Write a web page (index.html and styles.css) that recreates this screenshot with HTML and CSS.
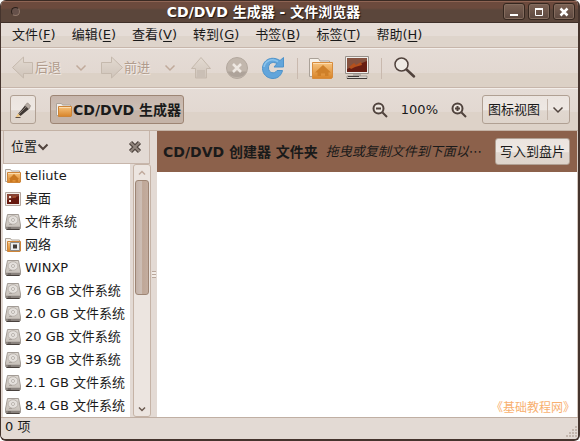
FILE: index.html
```html
<!DOCTYPE html>
<html lang="zh-CN">
<head>
<meta charset="utf-8">
<title>CD/DVD 生成器 - 文件浏览器</title>
<link rel="stylesheet" href="styles.css">
</head>
<body>
<svg class="defs" aria-hidden="true">
  <defs>
    <linearGradient id="gold" x1="0" y1="0" x2="0" y2="1"><stop offset="0" stop-color="#f8c47e"/><stop offset="1" stop-color="#d88428"/></linearGradient>
    <linearGradient id="metal" x1="0" y1="0" x2="0" y2="1"><stop offset="0" stop-color="#ddd8d2"/><stop offset="1" stop-color="#c3bcb5"/></linearGradient>
    <linearGradient id="fade" x1="0" y1="0" x2="0" y2="1"><stop offset="0" stop-color="#e3dad1"/><stop offset="1" stop-color="#cfc4ba"/></linearGradient>
  </defs>
  <symbol id="disk" viewBox="0 0 16 16">
    <path d="M2.500 .5h11l2 10.500v3.500l-1 1h-13l-1-1V11z" fill="url(#metal)" stroke="#a39c96"/>
    <path d="M1 12h14v2.500l-.5.500h-13l-.5-.5z" fill="#8a837e"/>
    <path d="M1 12.500h14" stroke="#b9b2ac"/>
    <path d="M1.500 15.500h13" stroke="#48413d"/>
    <path d="M3 14h3" stroke="#5f5752"/>
    <ellipse cx="8" cy="6" rx="5" ry="4.300" fill="#e4e0dc" stroke="#b8b1ab"/>
    <circle cx="8" cy="6" r="1.500" fill="#f5f2ef" stroke="#aaa39d" stroke-width=".8"/>
    <path d="M4 10.500h3" stroke="#a8a19b"/>
  </symbol>
  <symbol id="folder" viewBox="0 0 16 16">
    <path d="M.5 13.500v-12h5l1 1.500h8v10.500z" fill="#f4efe9" stroke="#aca49b"/>
    <path d="M2.500 4.500h13v9.500l-.5.500h-12.500z" fill="url(#gold)" stroke="#ce8538"/>
    <path d="M3 5.500h12" stroke="#fbdcae"/>
  </symbol>
  <symbol id="home" viewBox="0 0 24 24">
    <path d="M.5 20.500V2.500h9l1.500 2.500h9.500V20z" fill="#f6f1ea" stroke="#aaa198"/>
    <path d="M3.500 6.500h20v15l-1 1h-19z" fill="url(#gold)" stroke="#d78c3d"/>
    <path d="M6 16.500l8-7.500 8 7.500h-2.500V20H16v-2.500h-4V20H8.500v-3.500z" fill="#cf8029"/>
    <path d="M4 7.500h19" stroke="#fddcae"/>
  </symbol>
</svg>
<div class="window">
  <header class="titlebar">
    <button class="window-menu" aria-label="窗口菜单"></button>
    <h1>CD/DVD 生成器 - 文件浏览器</h1>
    <div class="window-buttons">
      <button aria-label="最小化"><svg viewBox="0 0 12 12"><path d="M2 9h8" stroke="#fff" stroke-width="2"/></svg></button>
      <button aria-label="最大化"><svg viewBox="0 0 12 12"><path d="M2.500 2.500h7v7h-7z" fill="none" stroke="#fff"/><path d="M2 3h8" stroke="#fff" stroke-width="2"/></svg></button>
      <button aria-label="关闭"><svg viewBox="0 0 12 12"><path d="M2.500 2.500l7 7m0-7l-7 7" stroke="#fff" stroke-width="2.500"/></svg></button>
    </div>
  </header>
  <nav class="menubar">
    <button>文件(<u>F</u>)</button>
    <button>编辑(<u>E</u>)</button>
    <button>查看(<u>V</u>)</button>
    <button>转到(<u>G</u>)</button>
    <button>书签(<u>B</u>)</button>
    <button>标签(<u>T</u>)</button>
    <button>帮助(<u>H</u>)</button>
  </nav>
  <div class="toolbar">
    <button class="nav" disabled><svg class="i24" viewBox="0 0 24 24"><path d="M1.500 11.500L12.500 1v5.500h9v11h-9V22z" fill="url(#fade)" stroke="#c5b9ad"/></svg>后退</button>
    <button class="drop" disabled aria-label="后退历史"><svg viewBox="0 0 12 8"><path d="M1.500 1.500L6 6l4.500-4.500" fill="none" stroke="#c0aa9b" stroke-width="1.500"/></svg></button>
    <button class="nav" disabled><svg class="i24" viewBox="0 0 24 24"><path d="M22.500 11.500L11.500 1v5.500h-10v11h10V22z" fill="url(#fade)" stroke="#c5b9ad"/></svg>前进</button>
    <button class="drop" disabled aria-label="前进历史"><svg viewBox="0 0 12 8"><path d="M1.500 1.500L6 6l4.500-4.500" fill="none" stroke="#c0aa9b" stroke-width="1.500"/></svg></button>
    <button class="tool" disabled aria-label="向上"><svg class="i24" viewBox="0 0 24 24"><path d="M12 1.500L21.500 12.500H17.500v9.500H6.500v-9.500H2.500z" fill="url(#fade)" stroke="#c5b9ad"/><path d="M8 14h8v7H8z" fill="#cabfb5"/></svg></button>
    <button class="tool" disabled aria-label="停止"><svg class="i24" viewBox="0 0 24 24"><circle cx="12" cy="12" r="10.500" fill="#c2b7ad" stroke="#b3a89e"/><path d="M2.500 15.500a10 8 0 0 0 19 0z" fill="#aea39a"/><path d="M8 8l8 8m0-8l-8 8" stroke="#eee8e2" stroke-width="2.500"/></svg></button>
    <button class="tool" aria-label="刷新"><svg class="i24" viewBox="0 0 24 24"><path d="M22.500 1.500v9.500h-9.500l3-3.500c-5-2.500-8.500 0-8.500 4.500 0 5 6 6.500 8.500 2.500h5.500c-1 4.500-4.500 8-9.500 8C6 22.500 1.500 18 1.500 12.500c0-8 8.500-13.500 17.500-8z" fill="#62a5db" stroke="#4e93ca"/><path d="M3 11C4 4.500 11 2 17 5.500" fill="none" stroke="#8cc4ec" stroke-width="1.500"/></svg></button>
    <span class="sep"></span>
    <button class="tool" aria-label="主文件夹"><svg class="i24" viewBox="0 0 24 24"><use href="#home"/></svg></button>
    <button class="tool" aria-label="计算机"><svg class="i24" viewBox="0 0 24 24"><path d="M.5.500h23v17H.5z" fill="#f1eeeb" stroke="#97908a"/><path d="M2 2h20v14H2z" fill="#681e13"/><path d="M2 2h20v3L2 13z" fill="#86523f"/><path d="M4 11l5-4 2 2 5-3 1 3-7 2-4 2z" fill="#b5501c"/><path d="M8 18h8v2H8z" fill="#b5aea8"/><path d="M2 20h20v2.500H2z" fill="#ddd8d2" stroke="#8c857f" stroke-width=".7"/><path d="M3 20.500h11M2 22.500h20" stroke="#413b38"/></svg></button>
    <span class="sep"></span>
    <button class="tool" aria-label="搜索"><svg class="i24" viewBox="0 0 24 24"><circle cx="8.500" cy="8.500" r="6.500" fill="#efeae4" stroke="#50423c" stroke-width="1.500"/><path d="M13.500 13.500L21 20.500" stroke="#50423c" stroke-width="2.500" stroke-linecap="round"/></svg></button>
  </div>
  <div class="locationbar">
    <button class="raised edit" aria-label="编辑位置"><svg class="i16" viewBox="0 0 16 16"><path d="M3 12l7-8.500 4 3.500-8.500 7z" fill="#3f3834"/><path d="M4 12l7-7" stroke="#887d75"/><path d="M10 3.500L12.500.8l3 3L14 7z" fill="#b6aca4" stroke="#8c827a" stroke-width=".7"/><path d="M3 11.500L.5 15.500l5-1.500z" fill="#edc581"/><path d="M.5 15.500h5" stroke="#5b4c43"/></svg></button>
    <button class="raised path"><svg class="i16" viewBox="0 0 16 16"><use href="#folder"/></svg>CD/DVD 生成器</button>
    <div class="zoom">
      <button aria-label="缩小"><svg class="i16" viewBox="0 0 16 16"><circle cx="6.500" cy="6.500" r="5" fill="#ede6df" stroke="#50433d" stroke-width="2"/><path d="M4 6.500h5M10.500 10.500L15 15" stroke="#50433d" stroke-width="2"/></svg></button>
      <span>100%</span>
      <button aria-label="放大"><svg class="i16" viewBox="0 0 16 16"><circle cx="6.500" cy="6.500" r="5" fill="#ede6df" stroke="#50433d" stroke-width="2"/><path d="M4 6.500h5M6.500 4v5M10.500 10.500L15 15" stroke="#50433d" stroke-width="2"/></svg></button>
    </div>
    <div class="combo">
      <select class="raised" aria-label="视图"><option>图标视图</option></select>
      <svg viewBox="0 0 12 8"><path d="M1.500 1.500L6 6l4.500-4.500" fill="none" stroke="#51443e" stroke-width="1.500"/></svg>
    </div>
  </div>
  <main class="panes">
    <aside class="sidebar">
      <div class="side-head">
        <button class="side-title">位置<svg viewBox="0 0 12 8"><path d="M1.500 1.500L6 6l4.500-4.500" fill="none" stroke="#51443e" stroke-width="2"/></svg></button>
        <button class="side-close" aria-label="关闭侧边栏"><svg viewBox="0 0 14 14"><path d="M2.500 2.500l9 9m0-9l-9 9" stroke="#4e443e" stroke-width="4.500"/><path d="M2.500 2.500l9 9m0-9l-9 9" stroke="#92867e" stroke-width="2"/></svg></button>
      </div>
      <div class="side-body">
        <ul class="places">
          <li><svg class="i16" viewBox="0 0 16 16"><use href="#folder"/><path d="M4 11l5-5 5 5h-1v3h-2.500v-2h-3v2H5v-3z" fill="#c97720"/></svg>teliute</li>
          <li><svg class="i16" viewBox="0 0 16 16"><path d="M.5 1.500h15v13H.5z" fill="#f2eeea" stroke="#b4a69e"/><path d="M2 3h12v10H2z" fill="#67190f"/><path d="M2 3h12v2L2 9z" fill="#884333"/><path d="M4 5h2v2H4zm0 4h2v2H4z" fill="#f5e5dc"/><path d="M8 6h3" stroke="#c25d2c"/></svg>桌面</li>
          <li><svg class="i16" viewBox="0 0 16 16"><use href="#disk"/></svg>文件系统</li>
          <li><svg class="i16" viewBox="0 0 16 16"><use href="#folder"/><path d="M5.500 5.500h9v8h-9z" fill="#e8ecee" stroke="#8d8883"/><path d="M8 7.500h4v4H8z" fill="#403a37"/></svg>网络</li>
          <li><svg class="i16" viewBox="0 0 16 16"><use href="#disk"/></svg>WINXP</li>
          <li><svg class="i16" viewBox="0 0 16 16"><use href="#disk"/></svg>76 GB 文件系统</li>
          <li><svg class="i16" viewBox="0 0 16 16"><use href="#disk"/></svg>2.0 GB 文件系统</li>
          <li><svg class="i16" viewBox="0 0 16 16"><use href="#disk"/></svg>20 GB 文件系统</li>
          <li><svg class="i16" viewBox="0 0 16 16"><use href="#disk"/></svg>39 GB 文件系统</li>
          <li><svg class="i16" viewBox="0 0 16 16"><use href="#disk"/></svg>2.1 GB 文件系统</li>
          <li><svg class="i16" viewBox="0 0 16 16"><use href="#disk"/></svg>8.4 GB 文件系统</li>
        </ul>
        <div class="scrollbar">
          <button aria-label="向上滚动"><svg viewBox="0 0 8 6"><path d="M1 4.500l3-3 3 3" fill="none" stroke="#c0aa9d" stroke-width="1.500"/></svg></button>
          <div class="track"><div class="thumb"></div></div>
          <button aria-label="向下滚动"><svg viewBox="0 0 8 6"><path d="M1 1.500l3 3 3-3" fill="none" stroke="#6b5a50" stroke-width="1.500"/></svg></button>
        </div>
      </div>
    </aside>
    <div class="divider"><i></i></div>
    <section class="content">
      <div class="banner">
        <strong>CD/DVD 创建器 文件夹</strong>
        <em>拖曳或复制文件到下面以⋯</em>
        <button class="raised">写入到盘片</button>
      </div>
      <div class="canvas"><span>《基础教程网》</span></div>
    </section>
  </main>
  <footer class="statusbar">
    <span>0 项</span>
    <svg viewBox="0 0 12 12"><path d="M9 1h2M9 4h2M6 4h2M9 7h2M6 7h2M3 7h2M9 10h2M6 10h2M3 10h2M0 10h2" stroke="#b9aaa0" stroke-width="1.500"/></svg>
  </footer>
</div>
</body>
</html>
```
FILE: styles.css
```css
* { box-sizing: border-box; }
body {
  margin: 0;
  background: #fff;
  color: #1a1a1a;
  font: 13px/18px "DejaVu Sans", "Noto Sans CJK SC", sans-serif;
}
button, select { margin: 0; padding: 0; border: 0; background: none; color: inherit; font: inherit; }
svg { display: block; flex: none; }
.defs { position: absolute; width: 0; height: 0; }
.i24 { width: 24px; height: 24px; }
.i16 { width: 16px; height: 16px; }
.window {
  display: flex;
  flex-direction: column;
  height: 100vh;
  overflow: hidden;
  border: 1px solid #45342d;
  border-width: 0 2px 2px 1px;
  border-radius: 6px;
  background: #e3dad4;
}

.titlebar {
  display: grid;
  grid-template-columns: 24px 1fr 76px;
  align-items: center;
  height: 23px;
  flex: none;
  border-top: 1px solid #3b2a23;
  border-bottom: 1px solid #3f3029;
  background: linear-gradient(#8e6454 0 1px, #6c4a3d 1px 7px, #5b463b 9px);
}
.titlebar h1 {
  margin: 0;
  color: #fff;
  font-size: 14px;
  line-height: 20px;
  text-align: center;
  text-shadow: 1px 1px 1px #201510;
  white-space: nowrap;
}
.window-menu { width: 9px; height: 9px; margin-left: 10px; border: 1px solid #2c201b; border-color: #2c201b #8f7769 #8f7769 #2c201b; border-radius: 5px; background: #66514a; }
.window-buttons { display: flex; justify-content: flex-end; gap: 3px; padding-right: 3px; }
.window-buttons button { display: grid; place-items: center; width: 22px; height: 17px; border: 1px solid #35271f; border-radius: 3px; background: linear-gradient(#7c6254, #5c483f); box-shadow: inset 0 0 0 1px #846c5e; }
.window-buttons svg { width: 12px; height: 12px; }

.menubar {
  display: flex;
  align-items: center;
  gap: 16px;
  height: 25px;
  flex: none;
  padding-left: 11px;
  border-bottom: 1px solid #c7b6ab;
  background: linear-gradient(#e5dcd6 0 13px, #ded4cb 13px);
}
.menubar button { white-space: nowrap; }
.menubar u { text-underline-offset: 2px; }

.toolbar {
  display: flex;
  align-items: center;
  height: 40px;
  flex: none;
  padding-left: 10px;
  border-top: 1px solid #f3eeea;
  border-bottom: 1px solid #c7b6ab;
  background: linear-gradient(#e5dcd6, #e2d8d1 24px, #dcd1c6 24px);
}
.nav { display: flex; align-items: center; color: #b19c8d; text-shadow: 1px 1px 0 #f2ece7; }
.drop { width: 39px; display: grid; place-items: center; }
.drop svg, .combo svg, .side-title svg { width: 12px; height: 8px; }
.tool { margin-right: 12px; }
.sep { width: 1px; height: 21px; margin-right: 11px; background: #c9b9ae; }

.locationbar {
  display: flex;
  align-items: center;
  height: 43px;
  flex: none;
  padding: 0 8px 0 9px;
  border-top: 1px solid #f3eeea;
  border-bottom: 1px solid #c3b2a5;
  background: linear-gradient(#e5dcd6, #e2d8d1 23px, #ddd2c8 23px);
}
.raised { border: 1px solid #b0a093; border-radius: 3px; background: linear-gradient(#ebe4df, #eee8e3 50%, #e0d7cf 55%, #ded4cb); }
.edit { display: grid; place-items: center; width: 26px; height: 29px; }
.path { display: flex; align-items: center; gap: 1px; height: 29px; margin-left: 14px; padding: 0 2px 0 5px; border-color: #9d8574; background: linear-gradient(#c6b5ab, #cdbfb5 50%, #c4b3a7 55%); font-size: 14px; font-weight: bold; white-space: nowrap; }
.zoom { display: flex; align-items: center; gap: 13px; margin-left: auto; margin-right: 15px; }
.zoom button { display: block; }
.combo { position: relative; }
.combo select { display: block; width: 88px; height: 29px; padding-left: 5px; appearance: none; }
.combo svg { position: absolute; right: 6px; top: 11px; }
.combo::after { content: ""; position: absolute; right: 22px; top: 4px; bottom: 4px; width: 1px; background: #c2b4a9; }

.panes { display: flex; flex: 1; min-height: 0; padding-left: 2px; }
.sidebar { display: flex; flex-direction: column; width: 148px; flex: none; }
.side-head { display: flex; align-items: center; justify-content: space-between; width: 147px; height: 33px; flex: none; padding: 0 7px; border: 1px solid #c7b6ab; border-top: 0; background: #e3dad4; }
.side-title { display: flex; align-items: center; }
.side-close svg { width: 14px; height: 14px; }
.side-body { display: flex; flex: 1; min-height: 0; gap: 3px; }
.places { flex: 1; margin: 0; padding: 0; list-style: none; background: #fff; overflow: hidden; }
.places li { display: flex; align-items: center; gap: 4px; height: 23px; padding-left: 2px; white-space: nowrap; }
.scrollbar { display: flex; flex-direction: column; width: 18px; border: 1px solid #c5b3a6; border-radius: 3px; background: #ece5e0; }
.scrollbar button { display: grid; place-items: center; height: 15px; flex: none; }
.scrollbar svg { width: 8px; height: 6px; }
.track { flex: 1; padding: 0 1px; }
.thumb { height: 52%; border: 1px solid #9d8574; border-radius: 3px; background: linear-gradient(90deg, #c4b2a8, #cdbfb6 45%, #bfa797 55%, #c3ad9f); }
.divider { display: grid; place-items: center; width: 6px; flex: none; }
.divider i { width: 4px; height: 7px; background: repeating-linear-gradient(#b9a79b 0 1px, #f2ece7 1px 3px); }
.content { display: flex; flex-direction: column; flex: 1; min-width: 0; background: #fff; border-right: 1px solid #d5c9c0; }
.banner { display: flex; align-items: center; height: 41px; flex: none; padding: 0 7px 0 6px; background: #8c614b; white-space: nowrap; }
.banner strong { font-size: 14px; }
.banner em { margin-left: 8px; }
.banner button { width: 75px; height: 27px; margin-left: auto; }
.canvas { display: flex; flex: 1; align-items: flex-end; justify-content: flex-end; padding-right: 2px; color: #f8b070; font-size: 12px; }
.statusbar { display: flex; justify-content: space-between; height: 22px; flex: none; padding-left: 4px; border-top: 1px solid #c0afa3; background: #e3dad4; }
.statusbar svg { width: 12px; height: 12px; margin-top: 8px; }
```
